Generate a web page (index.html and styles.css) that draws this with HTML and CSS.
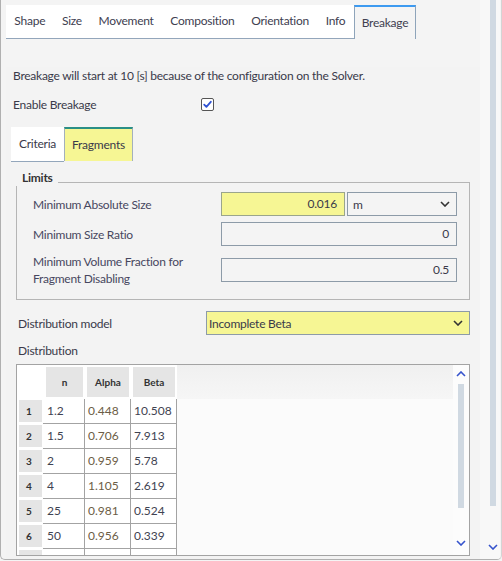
FILE: index.html
```html
<!DOCTYPE html>
<html>
<head>
<meta charset="utf-8">
<link rel="stylesheet" href="styles.css">
</head>
<body>
<div class="window">
  <div class="main">
    <div class="tabbar">
      <div class="tab">Shape</div>
      <div class="tab">Size</div>
      <div class="tab">Movement</div>
      <div class="tab">Composition</div>
      <div class="tab">Orientation</div>
      <div class="tab">Info</div>
      <div class="tab active">Breakage</div>
    </div>
    <div class="panel">
      <p class="notice">Breakage will start at 10 [s] because of the configuration on the Solver.</p>
      <div class="enable">
        <span class="enable-label">Enable Breakage</span>
        <span class="checkbox"><svg width="11" height="11" viewBox="0 0 11 11"><path d="M2.2 5.6 L4.4 7.8 L8.8 2.8" fill="none" stroke="#2f52d4" stroke-width="1.8" stroke-linecap="round" stroke-linejoin="round"/></svg></span>
      </div>
      <div class="subtabs">
        <div class="subtab">Criteria</div>
        <div class="subtab active">Fragments</div>
      </div>
      <div class="subpanel">
        <div class="group">
          <div class="group-title"><span class="group-name">Limits</span><span class="group-line"></span></div>
          <div class="group-body">
            <div class="label">Minimum Absolute Size</div>
            <div class="field split">
              <div class="input highlight value-input">0.016</div>
              <div class="select unit">
                <span>m</span>
                <svg class="chev" width="10" height="6" viewBox="0 0 10 6"><path d="M1 1 L5 5 L9 1" fill="none" stroke="#333" stroke-width="1.6"/></svg>
              </div>
            </div>
            <div class="label">Minimum Size Ratio</div>
            <div class="field"><div class="input">0</div></div>
            <div class="label two">Minimum Volume Fraction for<br>Fragment Disabling</div>
            <div class="field"><div class="input">0.5</div></div>
          </div>
        </div>
        <div class="model-row">
          <span class="model-label">Distribution model</span>
          <div class="select highlight model-select">
            <span>Incomplete Beta</span>
            <svg class="chev" width="10" height="6" viewBox="0 0 10 6"><path d="M1 1 L5 5 L9 1" fill="none" stroke="#333" stroke-width="1.6"/></svg>
          </div>
        </div>
        <div class="dist-label">Distribution</div>
        <div class="table-box">
          <div class="grid-area">
            <div class="grid">
              <div class="corner"></div>
              <div class="hcell"><span>n</span></div>
              <div class="hcell"><span>Alpha</span></div>
              <div class="hcell"><span>Beta</span></div>
              <div class="hfill"></div>

              <div class="rlabel"><span>1</span></div><div class="cell">1.2</div><div class="cell alpha">0.448</div><div class="cell">10.508</div><div class="fill"></div>
              <div class="rlabel"><span>2</span></div><div class="cell">1.5</div><div class="cell alpha">0.706</div><div class="cell">7.913</div><div class="fill"></div>
              <div class="rlabel"><span>3</span></div><div class="cell">2</div><div class="cell alpha">0.959</div><div class="cell">5.78</div><div class="fill"></div>
              <div class="rlabel"><span>4</span></div><div class="cell">4</div><div class="cell alpha">1.105</div><div class="cell">2.619</div><div class="fill"></div>
              <div class="rlabel"><span>5</span></div><div class="cell">25</div><div class="cell alpha">0.981</div><div class="cell">0.524</div><div class="fill"></div>
              <div class="rlabel"><span>6</span></div><div class="cell">50</div><div class="cell alpha">0.956</div><div class="cell">0.339</div><div class="fill"></div>
              <div class="rlabel"><span></span></div><div class="cell"></div><div class="cell alpha"></div><div class="cell"></div><div class="fill"></div>
            </div>
          </div>
          <div class="tscroll">
            <svg width="10" height="6" viewBox="0 0 10 6"><path d="M1 5 L5 1 L9 5" fill="none" stroke="#3553cc" stroke-width="1.6"/></svg>
            <div class="ttrack"></div>
            <svg class="tdown" width="10" height="6" viewBox="0 0 10 6"><path d="M1 1 L5 5 L9 1" fill="none" stroke="#3553cc" stroke-width="1.6"/></svg>
          </div>
        </div>
      </div>
    </div>
  </div>
  <div class="outer-scroll">
    <div class="otrack"></div>
    <svg class="odown" width="10" height="6" viewBox="0 0 10 6"><path d="M1 1 L5 5 L9 1" fill="none" stroke="#3553cc" stroke-width="1.6"/></svg>
  </div>
</div>
</body>
</html>
```

FILE: styles.css
```css
* { box-sizing: border-box; }
html, body { margin: 0; padding: 0; }
body {
  background: #f4f4f4;
  font-family: Lato, "Open Sans", sans-serif;
  font-size: 12px;
  letter-spacing: -0.25px;
  color: #3a3a4a;
}
.window {
  width: 502px;
  height: 560px;
  display: flex;
  border-left: 1px solid #b0b0b0;
  border-bottom: 1px solid #b0b0b0;
  border-right: 1px solid #d4d4d4;
  border-radius: 0 0 5px 5px;
  overflow: hidden;
}
.main {
  width: 479px;
  padding-left: 5px;
}
.tabbar {
  display: flex;
  margin-top: 5px;
  height: 34px;
}
.tab {
  background: #fff;
  height: 34px;
  padding: 0 8.35px;
  line-height: 32px;
  border-bottom: 1px solid #93a6bb;
  color: #404050;
  white-space: nowrap;
}
.tab.active {
  background: #f4f4f4;
  border-top: 2px solid #3d9af0;
  border-left: 1px solid #8ea4ba;
  border-right: 1px solid #8ea4ba;
  border-bottom: none;
  line-height: 31px;
  padding: 0 7px;
}
.panel {
  background: #f3f3f3;
  padding: 0 10px 0 7px;
  height: 521px;
}
.notice {
  margin: 28px 0 0;
  line-height: 18px;
  white-space: nowrap;
}
.enable {
  display: flex;
  align-items: center;
  margin-top: 10px;
  height: 18px;
}
.enable-label { width: 188px; }
.checkbox {
  width: 13px;
  height: 13px;
  border: 1px solid #555;
  border-radius: 2px;
  background: #fff;
  display: flex;
  align-items: center;
  justify-content: center;
}
.subtabs {
  display: flex;
  margin-top: 14px;
  margin-left: -2px;
  height: 35px;
}
.subtab {
  background: #fff;
  padding: 0 8px;
  line-height: 33px;
  border-bottom: 1px solid #93a6bb;
}
.subtab.active {
  background: #f6f694;
  border-top: 2px solid #2a8f86;
  border-left: 1px solid #a3b0bd;
  border-right: 1px solid #a3b0bd;
  border-bottom: none;
  padding: 0 7px;
  line-height: 32px;
  height: 34px;
}
.subpanel {
  padding-left: 3px;
}
.group {
  margin-top: 8px;
}
.group-title {
  display: flex;
  height: 16px;
}
.group-name {
  font-weight: bold;
  line-height: 16px;
  padding-left: 6px;
  padding-right: 5px;
  color: #333;
}
.group-line {
  flex: 1;
  align-self: flex-end;
  height: 4px;
  border-top: 1px solid #b5b5b5;
  border-right: 1px solid #b5b5b5;
}
.group-body {
  border: 1px solid #b5b5b5;
  border-top: none;
  padding: 6px 12px 11px 16px;
  display: grid;
  grid-template-columns: 188px 1fr;
  row-gap: 6px;
  align-items: center;
}
.label {
  color: #474760;
  line-height: 17px;
}
.label.two { padding: 1px 0; }
.field.split {
  display: flex;
  gap: 2px;
}
.input {
  height: 24px;
  border: 1px solid #8d9ba8;
  background: #f4f4f4;
  text-align: right;
  padding-right: 7px;
  line-height: 22px;
}
.value-input { width: 124px; }
.highlight { background: #f6f694; border-color: #9aa58c; }
.select {
  height: 24px;
  border: 1px solid #8d9ba8;
  background: #f4f4f4;
  display: flex;
  align-items: center;
  justify-content: space-between;
  padding: 0 6px 0 5px;
}
.select.highlight { background: #f6f694; border-color: #8d9ba8; }
.unit { flex: 1; }
.chev { display: block; }
.model-row {
  display: flex;
  align-items: center;
  margin-top: 11px;
  padding-left: 2px;
}
.model-label { width: 188px; }
.model-select {
  flex: 1;
  padding-left: 2px;
}
.dist-label {
  padding-left: 2px;
  margin-top: 7px;
  line-height: 18px;
}
.table-box {
  margin-top: 4px;
  height: 192px;
  border: 1px solid #a3a3a3;
  display: flex;
  background: #fbfbfb;
}
.grid-area {
  flex: 1;
  overflow: hidden;
}
.grid {
  display: grid;
  grid-template-columns: 26px 42px 46px 46px 1fr;
  grid-template-rows: 34px;
  grid-auto-rows: 25px;
}
.corner { background: #fff; }
.hcell {
  padding: 2px;
  background: #fff;
}
.hcell:nth-child(2) { padding-left: 3px; }
.hcell span {
  display: flex;
  height: 100%;
  align-items: center;
  justify-content: center;
  background: #e5e5e5;
  font-size: 10px;
  font-weight: bold;
  color: #333;
  letter-spacing: 0;
}
.hfill {
  background: linear-gradient(#f0f0f0, #f6f6f6);
}
.rlabel {
  padding: 1px 1px 2px 2px;
  background: #fff;
}
.rlabel span {
  display: block;
  height: 100%;
  background: #e5e5e5;
  font-size: 10px;
  font-weight: bold;
  color: #333;
  line-height: 22px;
  padding-left: 7px;
}
.cell {
  border-right: 1px solid #a3a3a3;
  border-bottom: 1px solid #a3a3a3;
  padding-left: 3px;
  line-height: 24px;
  background: #fff;
  color: #3f4352;
  font-size: 12px;
  letter-spacing: 0;
}
.cell.alpha { color: #6c5d46; }
.grid > .cell:nth-child(5n+2) { padding-left: 4px; }
.fill { background: #fbfbfb; }
.tscroll {
  width: 16px;
  background: #fcfcfc;
  display: flex;
  flex-direction: column;
  align-items: center;
  padding-top: 6px;
}
.ttrack {
  width: 6px;
  height: 124px;
  margin-top: 7px;
  background: #d0d9e2;
}
.tdown { margin-top: 32px; }
.outer-scroll {
  width: 20px;
  background: #f8f8f8;
  display: flex;
  flex-direction: column;
  align-items: center;
  padding-left: 5px;
}
.otrack {
  width: 6px;
  height: 506px;
  background: #d0d9e2;
}
.odown { margin-top: 38px; }
```
